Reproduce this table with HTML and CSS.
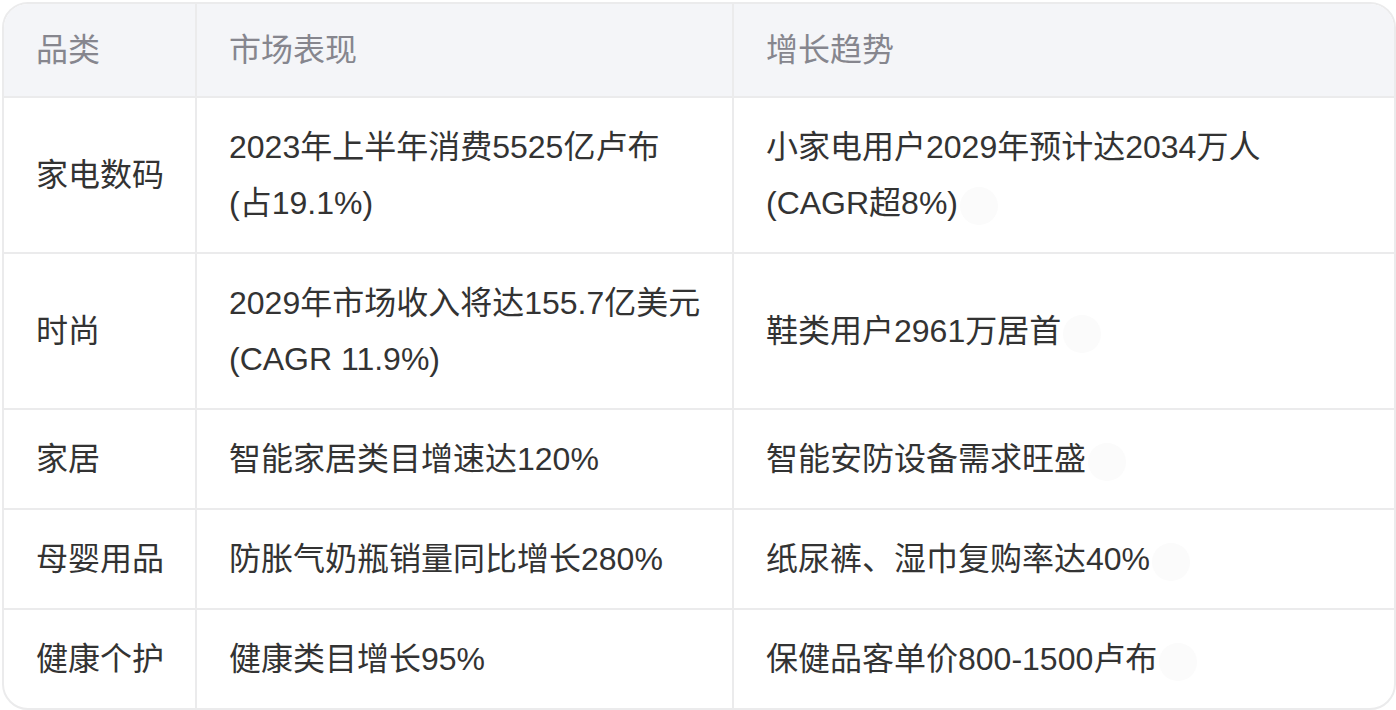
FILE: index.html
```html
<!DOCTYPE html>
<html lang="zh-CN">
<head>
<meta charset="utf-8">
<title>品类市场表现</title>
<link rel="stylesheet" href="styles.css">
</head>
<body>
<div class="table">
  <div class="cell head"><div>品类</div></div>
  <div class="cell head"><div>市场表现</div></div>
  <div class="cell head last"><div>增长趋势</div></div>

  <div class="cell"><div>家电数码</div></div>
  <div class="cell"><div>2023年上半年消费5525亿卢布<br>(占19.1%)</div></div>
  <div class="cell last"><div>小家电用户2029年预计达2034万人<br>(CAGR超8%)<span class="dot"></span></div></div>

  <div class="cell"><div>时尚</div></div>
  <div class="cell"><div>2029年市场收入将达155.7亿美元<br>(CAGR 11.9%)</div></div>
  <div class="cell last"><div>鞋类用户2961万居首<span class="dot"></span></div></div>

  <div class="cell"><div>家居</div></div>
  <div class="cell"><div>智能家居类目增速达120%</div></div>
  <div class="cell last"><div>智能安防设备需求旺盛<span class="dot"></span></div></div>

  <div class="cell"><div>母婴用品</div></div>
  <div class="cell"><div>防胀气奶瓶销量同比增长280%</div></div>
  <div class="cell last"><div>纸尿裤、湿巾复购率达40%<span class="dot"></span></div></div>

  <div class="cell bottom"><div>健康个护</div></div>
  <div class="cell bottom"><div>健康类目增长95%</div></div>
  <div class="cell last bottom"><div>保健品客单价800-1500卢布<span class="dot"></span></div></div>
</div>
</body>
</html>
```

FILE: styles.css
```css
html, body {
  margin: 0;
  padding: 0;
  background: #ffffff;
}

body {
  padding: 2px 0 0 2px;
  font-family: "Liberation Sans", "Noto Sans CJK SC", sans-serif;
  font-size: 32px;
  line-height: 56px;
  color: #333333;
}

.table {
  width: 1394px;
  box-sizing: border-box;
  border: 2px solid #ebebec;
  border-radius: 26px;
  overflow: hidden;
  display: grid;
  grid-template-columns: 193px 537px 1fr;
}

.cell {
  padding: 21px 20px 21px 32px;
  border-right: 2px solid #ebebec;
  border-bottom: 2px solid #ebebec;
  display: flex;
  flex-direction: column;
  justify-content: center;
  white-space: nowrap;
}

.cell.last {
  border-right: none;
}

.cell.bottom {
  border-bottom: none;
}

.cell.head {
  padding-top: 18px;
  padding-bottom: 18px;
  background: #f4f5f8;
  color: #86868e;
}

.dot {
  display: inline-block;
  width: 38px;
  height: 38px;
  margin-left: 2px;
  border-radius: 50%;
  background: #fbfbfb;
  vertical-align: middle;
}
```
